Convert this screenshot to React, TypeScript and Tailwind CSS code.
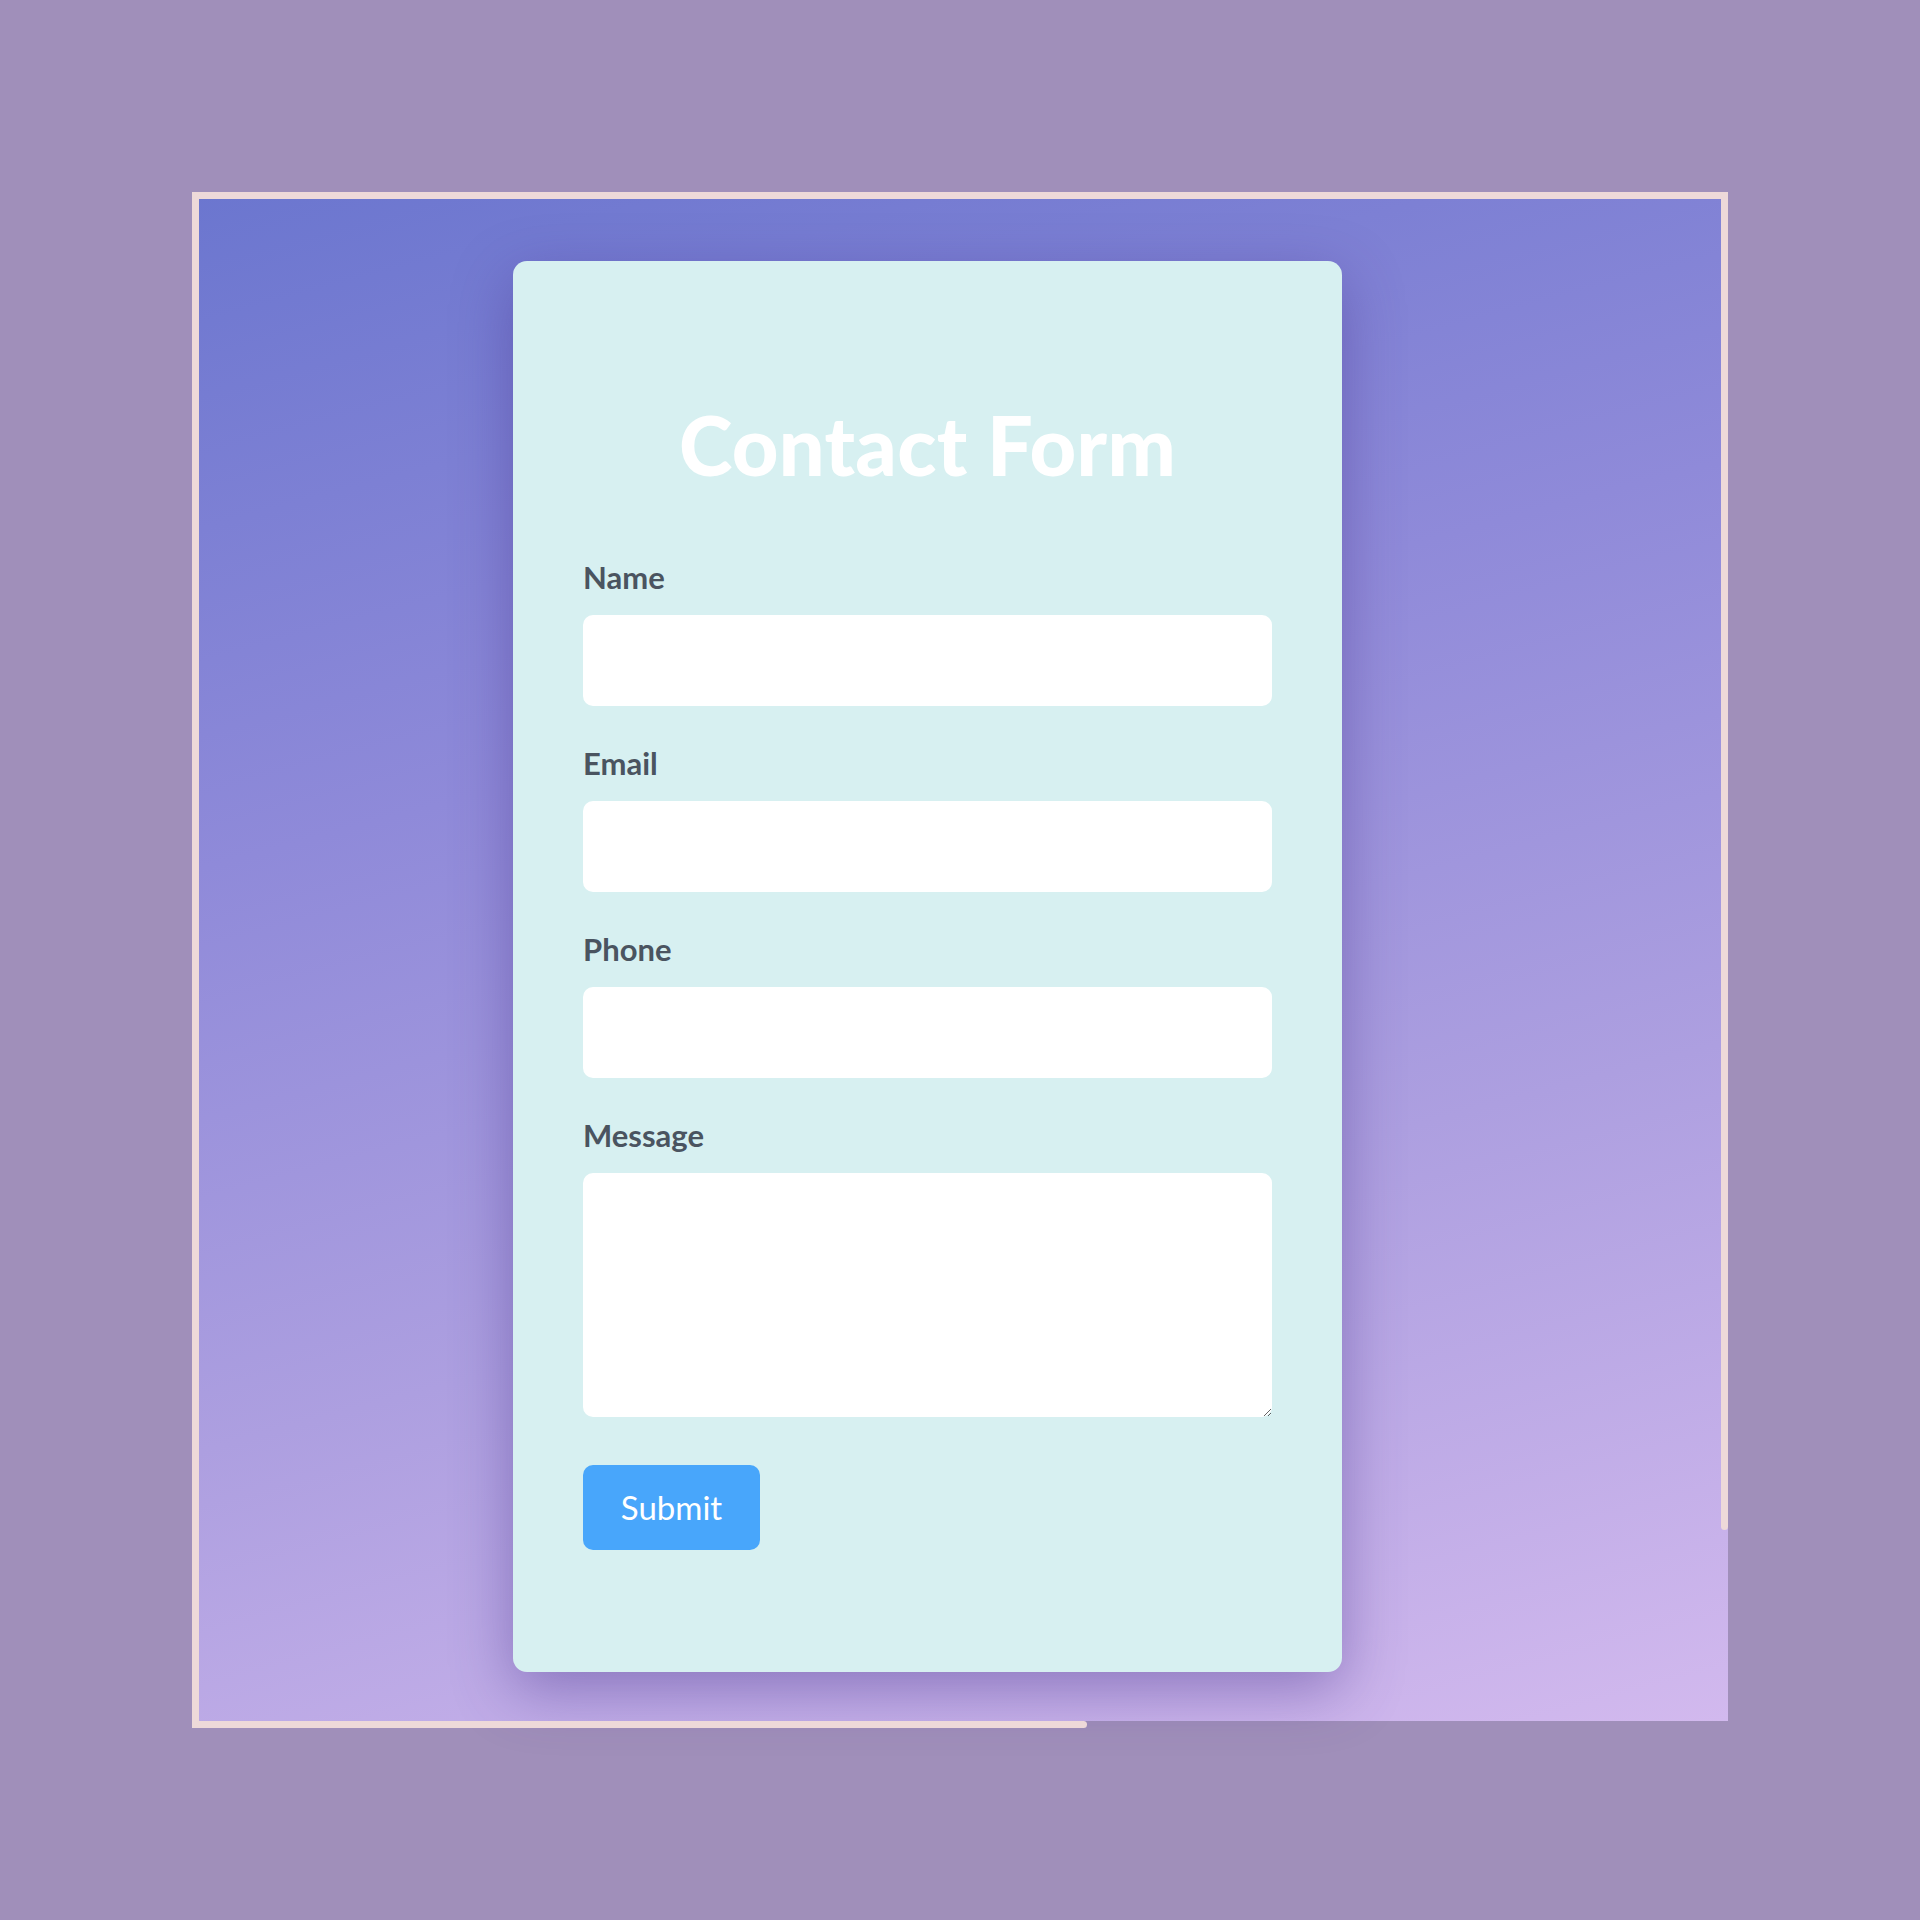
import React from "react";

const fields = [
  { id: "name", label: "Name", type: "text" },
  { id: "email", label: "Email", type: "email" },
  { id: "phone", label: "Phone", type: "tel" },
];

export default function App() {
  return (
    <div
      className="min-h-[1920px] w-[1920px] bg-[#a08fba] p-[192px]"
      style={{ fontFamily: "Lato, 'Open Sans', sans-serif" }}
    >
      <div className="relative h-[1536px] w-[1536px]">
        {/* gradient panel */}
        <div className="h-[1529px] w-[1536px] bg-[linear-gradient(165deg,#6b76cf_0%,#8f8ad9_35%,#ad9fe0_65%,#d2b9ee_100%)] pl-[321px] pt-[69px]">
          <div className="w-[829px] rounded-[14px] bg-[#d7f0f1] px-[70px] pb-[122px] pt-[144px] shadow-[0_18px_60px_rgba(70,50,140,0.45)]">
            <h1 className="text-center text-[81px] font-black leading-[80px] tracking-[0.3px] text-white">
              Contact Form
            </h1>

            <form className="mt-[74px] flex flex-col" onSubmit={(e) => e.preventDefault()}>
              {fields.map((f) => (
                <div key={f.id} className="mb-[39px] flex flex-col">
                  <label htmlFor={f.id} className="mb-[20px] text-[31px] font-bold leading-[36px] text-[#4a5460]">
                    {f.label}
                  </label>
                  <input
                    id={f.id}
                    type={f.type}
                    className="h-[91px] w-full rounded-[10px] bg-white px-4 text-[28px] outline-none"
                  />
                </div>
              ))}
              <div className="flex flex-col">
                <label htmlFor="message" className="mb-[20px] text-[31px] font-bold leading-[36px] text-[#4a5460]">
                  Message
                </label>
                <textarea
                  id="message"
                  className="h-[244px] w-full rounded-[10px] bg-white px-4 py-3 text-[28px] outline-none"
                />
              </div>
              <button
                type="submit"
                className="mt-[48px] h-[85px] w-[177px] rounded-[10px] bg-[#48a6fb] text-[33px] text-white"
              >
                Submit
              </button>
            </form>
          </div>
        </div>

        {/* decorative frame lines */}
        <div className="absolute left-0 top-0 h-[7px] w-[1536px] bg-[#eed9d9]" />
        <div className="absolute left-0 top-0 h-[1536px] w-[7px] bg-[#eed9d9]" />
        <div className="absolute right-0 top-0 h-[1338px] w-[7px] rounded-b-sm bg-[#eed9d9]" />
        <div className="absolute bottom-0 left-0 h-[7px] w-[895px] rounded-r-sm bg-[#eed9d9]" />
      </div>
    </div>
  );
}
